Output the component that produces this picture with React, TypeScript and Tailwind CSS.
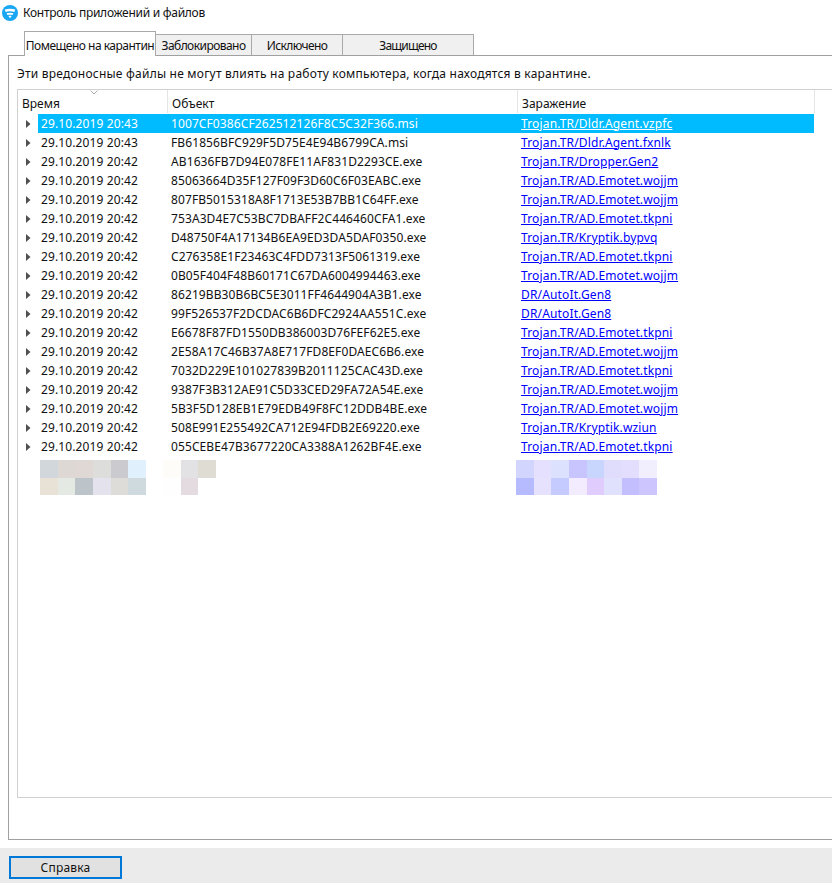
const rows: [string, string, string][] = [
  ["29.10.2019 20:43", "1007CF0386CF262512126F8C5C32F366.msi", "Trojan.TR/Dldr.Agent.vzpfc"],
  ["29.10.2019 20:43", "FB61856BFC929F5D75E4E94B6799CA.msi", "Trojan.TR/Dldr.Agent.fxnlk"],
  ["29.10.2019 20:42", "AB1636FB7D94E078FE11AF831D2293CE.exe", "Trojan.TR/Dropper.Gen2"],
  ["29.10.2019 20:42", "85063664D35F127F09F3D60C6F03EABC.exe", "Trojan.TR/AD.Emotet.wojjm"],
  ["29.10.2019 20:42", "807FB5015318A8F1713E53B7BB1C64FF.exe", "Trojan.TR/AD.Emotet.wojjm"],
  ["29.10.2019 20:42", "753A3D4E7C53BC7DBAFF2C446460CFA1.exe", "Trojan.TR/AD.Emotet.tkpni"],
  ["29.10.2019 20:42", "D48750F4A17134B6EA9ED3DA5DAF0350.exe", "Trojan.TR/Kryptik.bypvq"],
  ["29.10.2019 20:42", "C276358E1F23463C4FDD7313F5061319.exe", "Trojan.TR/AD.Emotet.tkpni"],
  ["29.10.2019 20:42", "0B05F404F48B60171C67DA6004994463.exe", "Trojan.TR/AD.Emotet.wojjm"],
  ["29.10.2019 20:42", "86219BB30B6BC5E3011FF4644904A3B1.exe", "DR/AutoIt.Gen8"],
  ["29.10.2019 20:42", "99F526537F2DCDAC6B6DFC2924AA551C.exe", "DR/AutoIt.Gen8"],
  ["29.10.2019 20:42", "E6678F87FD1550DB386003D76FEF62E5.exe", "Trojan.TR/AD.Emotet.tkpni"],
  ["29.10.2019 20:42", "2E58A17C46B37A8E717FD8EF0DAEC6B6.exe", "Trojan.TR/AD.Emotet.wojjm"],
  ["29.10.2019 20:42", "7032D229E101027839B2011125CAC43D.exe", "Trojan.TR/AD.Emotet.tkpni"],
  ["29.10.2019 20:42", "9387F3B312AE91C5D33CED29FA72A54E.exe", "Trojan.TR/AD.Emotet.wojjm"],
  ["29.10.2019 20:42", "5B3F5D128EB1E79EDB49F8FC12DDB4BE.exe", "Trojan.TR/AD.Emotet.wojjm"],
  ["29.10.2019 20:42", "508E991E255492CA712E94FDB2E69220.exe", "Trojan.TR/Kryptik.wziun"],
  ["29.10.2019 20:42", "055CEBE47B3677220CA3388A1262BF4E.exe", "Trojan.TR/AD.Emotet.tkpni"],
];

const blurTime = [
  ["#d2d7db", "#ddd8d3", "#e0d8d5", "#dddddb", "#cbcbcf", "#e0f0fd"],
  ["#e8e2d6", "#e4e9e3", "#bcc4ca", "#e4e2ec", "#dddcd9", "#cfdadf"],
];
const blurObj = [
  ["#fdfcf8", "#e2e1e3", "#dfdcd4"],
  ["#fefefe", "#e3dbdf", "#ffffff"],
];
const blurInf = [
  ["#d2d6fe", "#e4e0fe", "#dce2fe", "#c8c5fe", "#c8d6fe", "#e0dcfb", "#e4defe", "#f1eefe"],
  ["#b6baff", "#e6e2fe", "#c5cbfe", "#f3ecfe", "#e0cdfd", "#e0e2fd", "#c3bffe", "#cdc5fe"],
];

function Blur({ data, w }: { data: string[][]; w: string }) {
  return (
    <div className={`flex flex-col ${w}`}>
      {data.map((line, i) => (
        <div key={i} className={`flex ${i === 0 ? "h-[18px]" : "h-[17px]"}`}>
          {line.map((c, j) => (
            <div key={j} className="h-full flex-1" style={{ backgroundColor: c }} />
          ))}
        </div>
      ))}
    </div>
  );
}

function Caret() {
  return (
    <svg width="5" height="8" viewBox="0 0 5 8" className="block">
      <path d="M0 0L4.5 4L0 8Z" fill="#505050" />
    </svg>
  );
}

const tabs = [
  { label: "Заблокировано", w: "w-[96px]", t: "tracking-[-0.55px]" },
  { label: "Исключено", w: "w-[91px]", t: "tracking-[-0.6px]" },
  { label: "Защищено", w: "w-[131px]", t: "tracking-[-0.8px]" },
];

export default function App() {
  return (
    <div className="flex h-[883px] w-[832px] flex-col overflow-hidden bg-white font-['Noto_Sans','Liberation_Sans',sans-serif] text-[12px] text-[#111]">
      <div className="flex h-[24px] items-center gap-[5px] pl-[2px] pt-[1px]">
        <svg width="16" height="16" viewBox="0 0 16 16">
          <circle cx="8" cy="8" r="8" fill="#1aa6f2" />
          <path d="M2.8 4.6C6 3.4 10 3.4 13.2 4.6L12.4 7C9.8 6 6.2 6 3.6 7Z" fill="#fff" />
          <path d="M4.6 8.2C6.6 7.5 9.4 7.5 11.4 8.2L10.6 10C9 9.5 7 9.5 5.4 10Z" fill="#fff" />
          <path d="M6.4 11C7.4 10.7 8.6 10.7 9.6 11L8 13.2Z" fill="#fff" />
        </svg>
        <span className="tracking-[-0.28px]">Контроль приложений и файлов</span>
      </div>

      <div className="flex h-[31px] items-end pl-[24px]">
        <div className="z-10 -mb-px flex h-[25px] w-[132px] items-center justify-center border border-b-0 border-[#a9a9a9] bg-white pt-[3px] whitespace-nowrap tracking-[-0.5px]">
          Помещено на карантин
        </div>
        {tabs.map((t) => (
          <div
            key={t.label}
            className={`flex h-[21px] items-center justify-center border border-l-0 border-b-0 border-[#a9a9a9] bg-[#f0f0f0] pt-[2px] whitespace-nowrap ${t.w} ${t.t}`}
          >
            {t.label}
          </div>
        ))}
      </div>

      <div className="ml-[8px] flex h-[785px] flex-col border-y border-l border-[#a0a0a0] pt-[9px] pl-[8px]">
        <div className="h-[24px] whitespace-nowrap tracking-[0.22px]">
          Эти вредоносные файлы не могут влиять на работу компьютера, когда находятся в карантине.
        </div>
        <div className="h-[709px] w-[815px] border border-r-0 border-[#d0d0d0]">
          <div className="relative flex h-[24px] items-end pb-[1px]">
            <div className="absolute left-[72px] top-0">
              <svg width="8" height="5" viewBox="0 0 8 5" className="block">
                <path d="M0.5 0.5L4 4L7.5 0.5" fill="none" stroke="#b0b0b0" />
              </svg>
            </div>
            <div className="flex h-full w-[150px] items-end border-r border-[#e5e5e5] pl-[4px]">Время</div>
            <div className="flex h-full w-[350px] items-end border-r border-[#e5e5e5] pl-[4px]">Объект</div>
            <div className="flex h-full w-[297px] items-end border-r border-[#e5e5e5] pl-[4px]">Заражение</div>
          </div>
          <div className="flex flex-col">
            {rows.map((r, i) => {
              const sel = i === 0;
              return (
                <div key={i} className="flex h-[19px] items-center">
                  <div className="flex h-full w-[20px] items-center pl-[8px]">
                    <Caret />
                  </div>
                  <div className={`flex h-full w-[776px] items-center ${sel ? "bg-[#00bbff] text-white" : ""}`}>
                    <div className="w-[132px] pl-[3px] tracking-[0.12px]">{r[0]}</div>
                    <div className="w-[350px] pl-[1px] tracking-[0.1px]">{r[1]}</div>
                    <div className={`pl-[1px] underline tracking-[0.15px] ${sel ? "text-white" : "text-[#0000ff]"}`}>{r[2]}</div>
                  </div>
                </div>
              );
            })}
          </div>
          <div className="flex pt-[4px]">
            <div className="ml-[22px] w-[106px]">
              <Blur data={blurTime} w="w-[106px]" />
            </div>
            <div className="ml-[17px] w-[53px]">
              <Blur data={blurObj} w="w-[53px]" />
            </div>
            <div className="ml-[300px]">
              <Blur data={blurInf} w="w-[141px]" />
            </div>
          </div>
        </div>
      </div>

      <div className="mt-[8px] flex flex-1 items-start bg-[#ebebeb] pl-[9px] pt-[8px]">
        <div className="flex h-[23px] w-[113px] items-center justify-center border-2 border-[#0078d7] bg-[#e1e1e1] pt-[1px] tracking-[0.2px]">
          Справка
        </div>
      </div>
    </div>
  );
}
